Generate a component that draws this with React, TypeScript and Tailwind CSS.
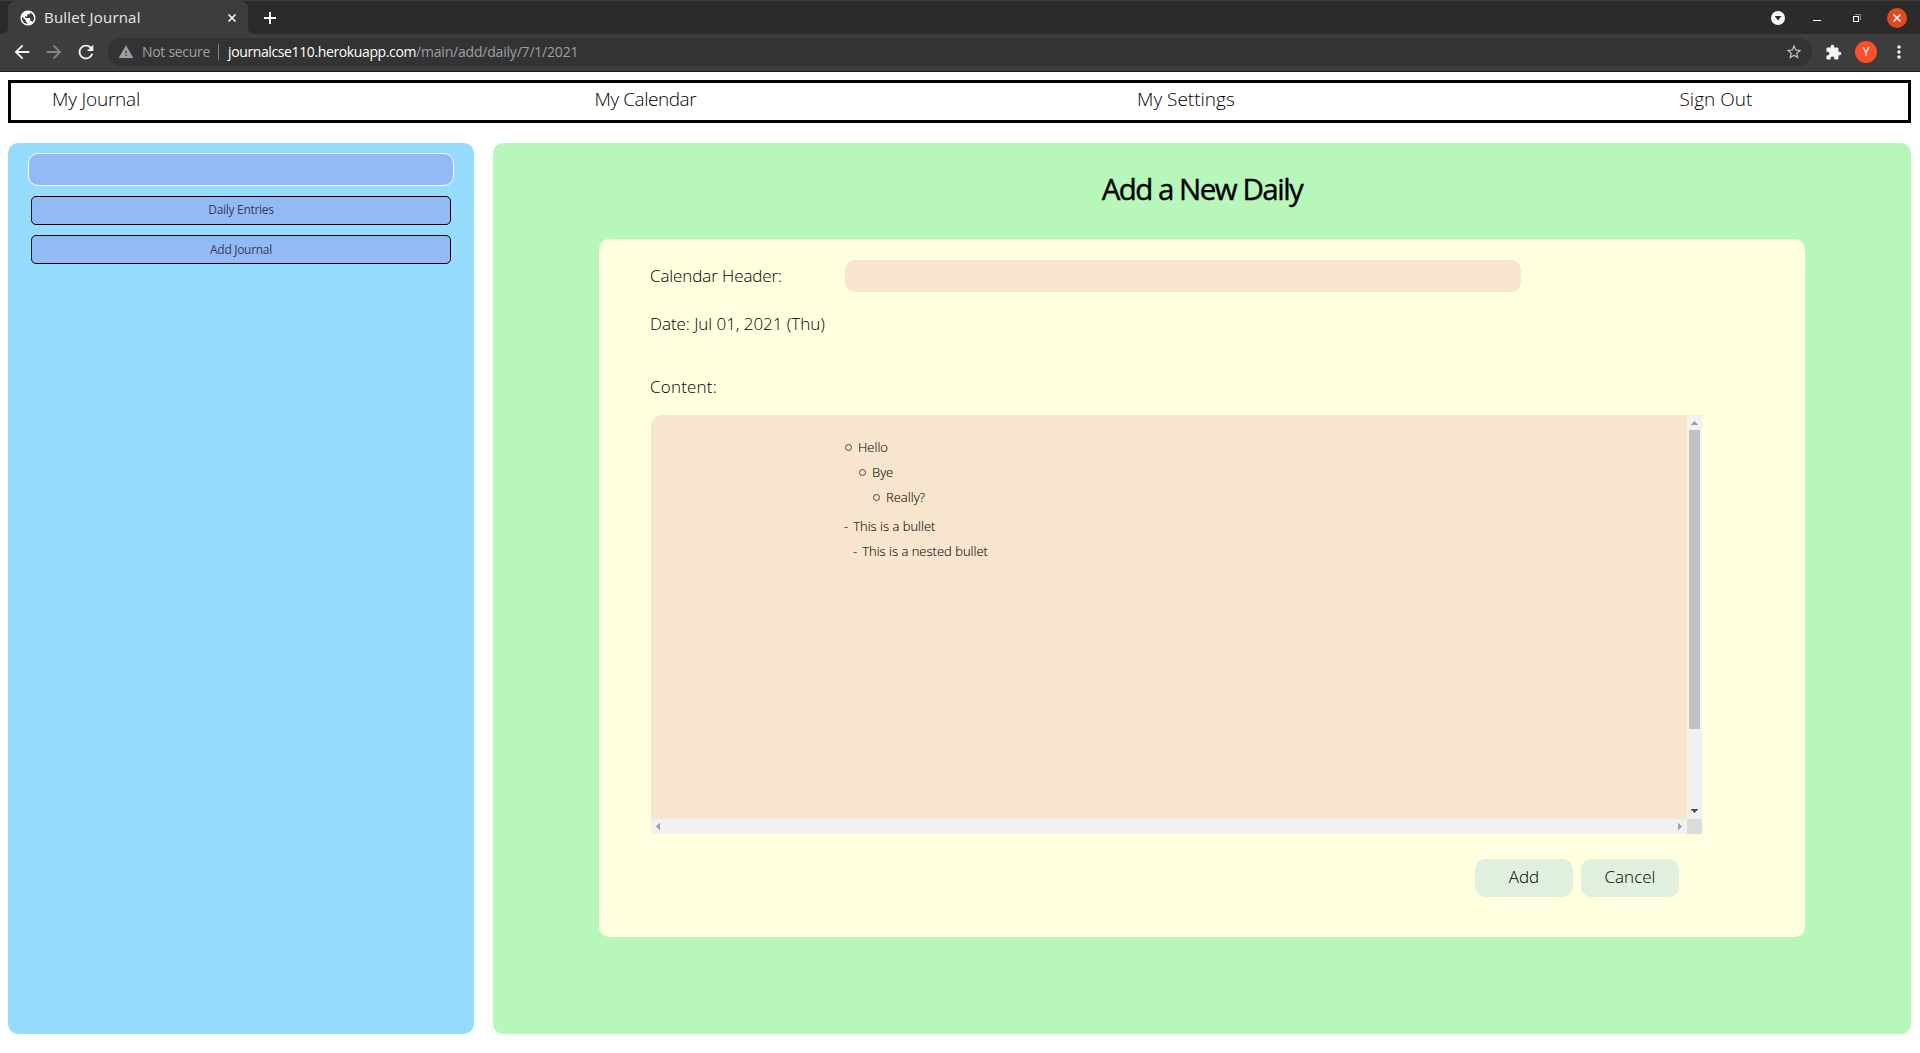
import React from "react";
import {
  MdArrowBack,
  MdArrowForward,
  MdExtension,
  MdMoreVert,
  MdPublic,
  MdRefresh,
  MdStarBorder,
  MdWarning,
} from "react-icons/md";

function Cross({ className }: { className: string }) {
  return (
    <svg viewBox="0 0 8 8" className={className} stroke="currentColor" strokeWidth="1.5" fill="none">
      <path d="M0.5 0.5 7.5 7.5M7.5 0.5 0.5 7.5" />
    </svg>
  );
}

function TabStrip() {
  return (
    <div className="flex h-[34px] border-t border-[#3c3c3c] text-white">
      <div className="w-2 rounded-br-md bg-[#2b2b2b]" />
      <div className="-mr-60 w-60 bg-[#2b2b2b] [clip-path:inset(0_0_8px_0)]" />
      <div className="relative flex w-60 items-center rounded-t-lg bg-[#3d3d3d] pl-[11px] pr-3">
        <MdPublic className="size-[18px] text-white" />
        <span className="ml-[7px] flex-1 whitespace-nowrap pb-0.5 text-[15px] leading-[30px] tracking-[0.2px] text-[#e8e8e8]">
          Bullet Journal
        </span>
        <Cross className="size-2" />
      </div>
      <div className="flex flex-1 items-center rounded-bl-md bg-[#2b2b2b] pl-4 pr-[13px]">
        <svg viewBox="0 0 12 12" className="size-3" stroke="currentColor" strokeWidth="2">
          <path d="M6 0V12M0 6H12" />
        </svg>
        <svg viewBox="0 0 14 14" className="ml-auto size-[14px]">
          <circle cx="7" cy="7" r="7" fill="#f8f8f8" />
          <path d="M3.6 5H10.4L7 9.4Z" fill="#2b2b2b" />
        </svg>
        <div className="ml-7 mt-[5px] h-px w-2 bg-white" />
        <svg viewBox="0 0 8 8" className="ml-8 size-2" fill="none">
          <path d="M2 0.5H7.5V6" stroke="#8a8a8a" />
          <rect x="0.5" y="2.5" width="5" height="5" stroke="#fff" />
        </svg>
        <div className="ml-[26px] flex size-5 items-center justify-center rounded-full bg-[#e2491f]">
          <Cross className="size-2" />
        </div>
      </div>
    </div>
  );
}

function AddressBar() {
  return (
    <div className="flex h-[38px] items-start border-b border-[#1f1f1f] pl-[11px] pr-[11px] pt-1 text-[#f4f4f4]">
      <div className="flex h-7 items-center">
        <MdArrowBack className="size-[22px]" />
        <MdArrowForward className="ml-2.5 size-[22px] text-[#858585]" />
        <MdRefresh className="ml-2.5 size-[22px]" />
      </div>
      <div className="ml-[11px] flex h-7 flex-1 items-center rounded-full bg-[#333333] pl-[10px] pr-[9px] text-sm leading-[26px] text-[#9aa0a6]">
        <MdWarning className="size-4" />
        <span className="ml-2 w-[68px] whitespace-nowrap tracking-[-0.3px]">Not secure</span>
        <span className="ml-2 h-4 w-px bg-[#7c7c7c]" />
        <span className="ml-[9px] whitespace-nowrap">
          <span className="tracking-[-0.38px] text-white">journalcse110.herokuapp.com</span>
          <span className="tracking-[-0.2px]">/main/add/daily/7/1/2021</span>
        </span>
        <MdStarBorder className="ml-auto size-[18px] text-[#c4c4c4]" />
      </div>
      <div className="flex h-7 items-center">
        <MdExtension className="ml-[13px] size-[17px]" />
        <div className="ml-[13px] flex size-[22px] items-center justify-center rounded-full bg-[#fa4f27] font-[Roboto] text-[12px]">
          Y
        </div>
        <MdMoreVert className="ml-[12px] size-5" />
      </div>
    </div>
  );
}

const navItems = ["My Journal", "My Calendar", "My Settings", "Sign Out"];
const navTracking: Record<string, string> = {
  "My Journal": "tracking-[-0.2px]",
  "My Calendar": "tracking-[-0.45px]",
};

function NavBar() {
  return (
    <nav className="ml-2 mr-[9px] mt-2 flex h-[43px] border-[3px] border-black pl-[41px]">
      {navItems.map((item) => (
        <a
          key={item}
          className={`w-[542.5px] shrink-0 whitespace-nowrap text-[19px] leading-[33px] last:w-auto ${navTracking[item] ?? ""}`}
        >
          {item}
        </a>
      ))}
    </nav>
  );
}

function Sidebar() {
  return (
    <aside className="flex w-[466px] flex-col rounded-[10px] bg-[#96dcfc] px-5 pt-2.5">
      <div className="h-[33px] rounded-[10px] border border-white bg-[#93baf5]" />
      <div className="mx-[3px] mt-2.5 flex flex-col gap-2.5 text-xs font-normal tracking-[-0.3px] text-[#343c55]">
        <button className="h-[29px] rounded-[5px] border border-black bg-[#93baf5] pb-0.5">Daily Entries</button>
        <button className="h-[29px] rounded-[5px] border border-black bg-[#93baf5]">Add Journal</button>
      </div>
    </aside>
  );
}

const arrows = {
  up: "M3 0H4V1H5V2H6V3H7V4H0V3H1V2H2V1H3Z",
  down: "M0 0H7V1H6V2H5V3H4V4H3V3H2V2H1V1H0Z",
  left: "M0 3H1V2H2V1H3V0H4V7H3V6H2V5H1V4H0Z",
  right: "M0 0H1V1H2V2H3V3H4V4H3V5H2V6H1V7H0Z",
};

function Circle() {
  return <span className="size-[7px] rounded-full border border-[#4d453d]" />;
}

function Editor() {
  return (
    <div className="ml-[52px] grid h-[419px] w-[1051px] grid-cols-[1fr_15px] grid-rows-[1fr_15px] overflow-hidden rounded-tl-[10px]">
      <div className="bg-[#f7e5cd] pt-5 text-[13px] leading-[25px] text-black [-webkit-text-stroke:0.1px_#2c2824]">
        <div className="ml-[194px] flex items-center gap-[6px]"><Circle />Hello</div>
        <div className="ml-[208px] flex items-center gap-[6px]"><Circle />Bye</div>
        <div className="ml-[222px] flex items-center gap-[6px]"><Circle />Really?</div>
        <div className="ml-[193px] mt-1 flex gap-[5px]"><span>-</span>This is a bullet</div>
        <div className="ml-[202px] flex gap-[5px]"><span>-</span>This is a nested bullet</div>
      </div>
      <div className="flex flex-col items-center bg-[#f1f1f1]">
        <svg viewBox="0 0 7 4" className="mt-1.5 h-1 w-[7px]" fill="#a3a3a3"><path d={arrows.up} /></svg>
        <div className="mt-[5px] h-[299px] w-[11px] bg-[#c1c1c1]" />
        <svg viewBox="0 0 7 4" className="mb-1.5 mt-auto h-1 w-[7px]" fill="#505050"><path d={arrows.down} /></svg>
      </div>
      <div className="flex items-center justify-between bg-[#f1f1f1] px-[5px]">
        <svg viewBox="0 0 4 7" className="h-[7px] w-1" fill="#a3a3a3"><path d={arrows.left} /></svg>
        <svg viewBox="0 0 4 7" className="h-[7px] w-1" fill="#a3a3a3"><path d={arrows.right} /></svg>
      </div>
      <div className="bg-[#dcdcdc]" />
    </div>
  );
}

function DailyForm() {
  return (
    <main className="flex flex-1 flex-col rounded-[10px] bg-[#b7f7b9] pt-[26px]">
      <h1 className="text-center text-[29.5px] font-medium leading-10 tracking-[-1.5px] text-black [-webkit-text-stroke:0.4px_#000]">
        Add a New Daily
      </h1>
      <section className="ml-[106px] mt-[30px] flex h-[698px] w-[1206px] flex-col rounded-[10px] bg-[#ffffe0] text-[17px]">
        <div className="ml-[51px] mt-[21px] flex h-8">
          <label className="w-[195px] whitespace-nowrap leading-[31px] tracking-[-0.1px]">Calendar Header:</label>
          <div className="h-8 w-[676px] rounded-[10px] bg-[#f7e5cd]" />
        </div>
        <p className="ml-[51px] mt-4 leading-[31px] tracking-[-0.05px]">Date: Jul 01, 2021 (Thu)</p>
        <p className="ml-[51px] mt-8 leading-[31px] tracking-[0.2px]">Content:</p>
        <div className="mt-[13px]">
          <Editor />
        </div>
        <div className="mt-[25px] flex justify-end gap-2 pr-[126px]">
          <button className="h-[38px] w-[98px] rounded-[10px] bg-[#e1efdf] pb-0.5">Add</button>
          <button className="h-[38px] w-[98px] rounded-[10px] bg-[#e1efdf] pb-0.5">Cancel</button>
        </div>
      </section>
    </main>
  );
}

export default function App() {
  return (
    <div className="flex h-[1053px] w-[1920px] flex-col overflow-hidden bg-white font-['Open_Sans',sans-serif]">
      <header className="h-[72px] bg-[#3d3d3d]">
        <TabStrip />
        <AddressBar />
      </header>
      <div className="flex flex-1 flex-col font-light text-black">
        <NavBar />
        <div className="mx-2 mb-[19px] mt-5 flex flex-1 gap-[19px] pr-px">
          <Sidebar />
          <DailyForm />
        </div>
      </div>
    </div>
  );
}
